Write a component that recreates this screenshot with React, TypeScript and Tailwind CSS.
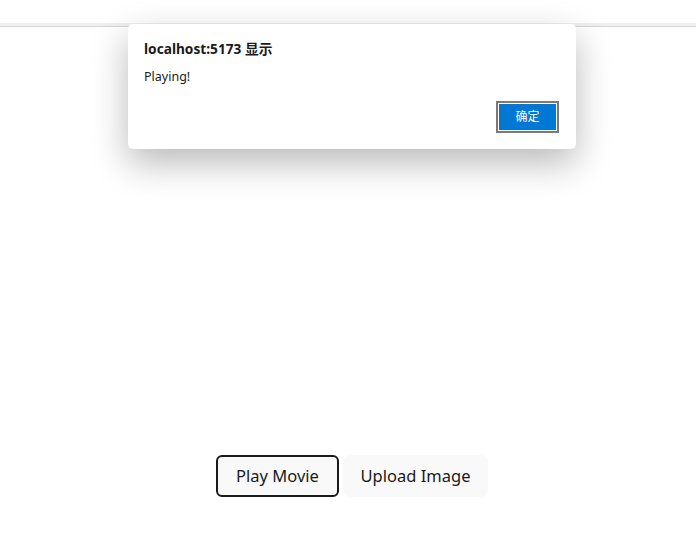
import { useState } from 'react'

export default function App() {
  const [open, setOpen] = useState(true)

  return (
    <div
      className="relative h-[540px] w-[696px] overflow-hidden bg-white"
      style={{ fontFamily: '"Noto Sans", "Noto Sans CJK SC", sans-serif' }}
    >
      {/* browser strip */}
      <div className="h-[23px] bg-white" />
      <div className="h-[3px] bg-[#efefef]" />
      <div className="h-px bg-[#d9d9d9]" />

      {/* page */}
      <div className="flex justify-center gap-[4px] pl-[8px] pt-[428px]">
        <button
          onClick={() => setOpen(true)}
          className="h-[42px] w-[123px] rounded-[6px] border-2 border-[#1a1a1a] bg-[#f9f9f9] text-[16.5px] text-[#1a1a1a]"
        >
          Play Movie
        </button>
        <button className="h-[42px] w-[145px] rounded-[8px] border-2 border-transparent bg-[#f9f9f9] text-[16.5px] text-[#1a1a1a]">
          Upload Image
        </button>
      </div>

      {/* alert dialog */}
      {open && (
        <div className="absolute left-[128px] top-[24px] h-[125px] w-[448px] rounded-[5px] bg-white shadow-[0_14px_36px_rgba(0,0,0,0.28)]">
          <div className="px-4 pt-[15px] text-[13.7px] font-bold leading-[20px] text-[#1a1a1a]">
            localhost:5173 显示
          </div>
          <div className="px-4 pt-[10px] text-[12.5px] leading-[16px] text-[#1a1a1a]">Playing!</div>
          <div className="flex justify-end pr-[17px] pt-[16px]">
            <button
              onClick={() => setOpen(false)}
              className="flex h-[32px] w-[63px] items-center justify-center border-2 border-[#7a7a7a] bg-white p-px"
            >
              <span className="flex h-full w-full items-center justify-center bg-[#0078d4] text-[12px] text-white">
                确定
              </span>
            </button>
          </div>
        </div>
      )}
    </div>
  )
}
